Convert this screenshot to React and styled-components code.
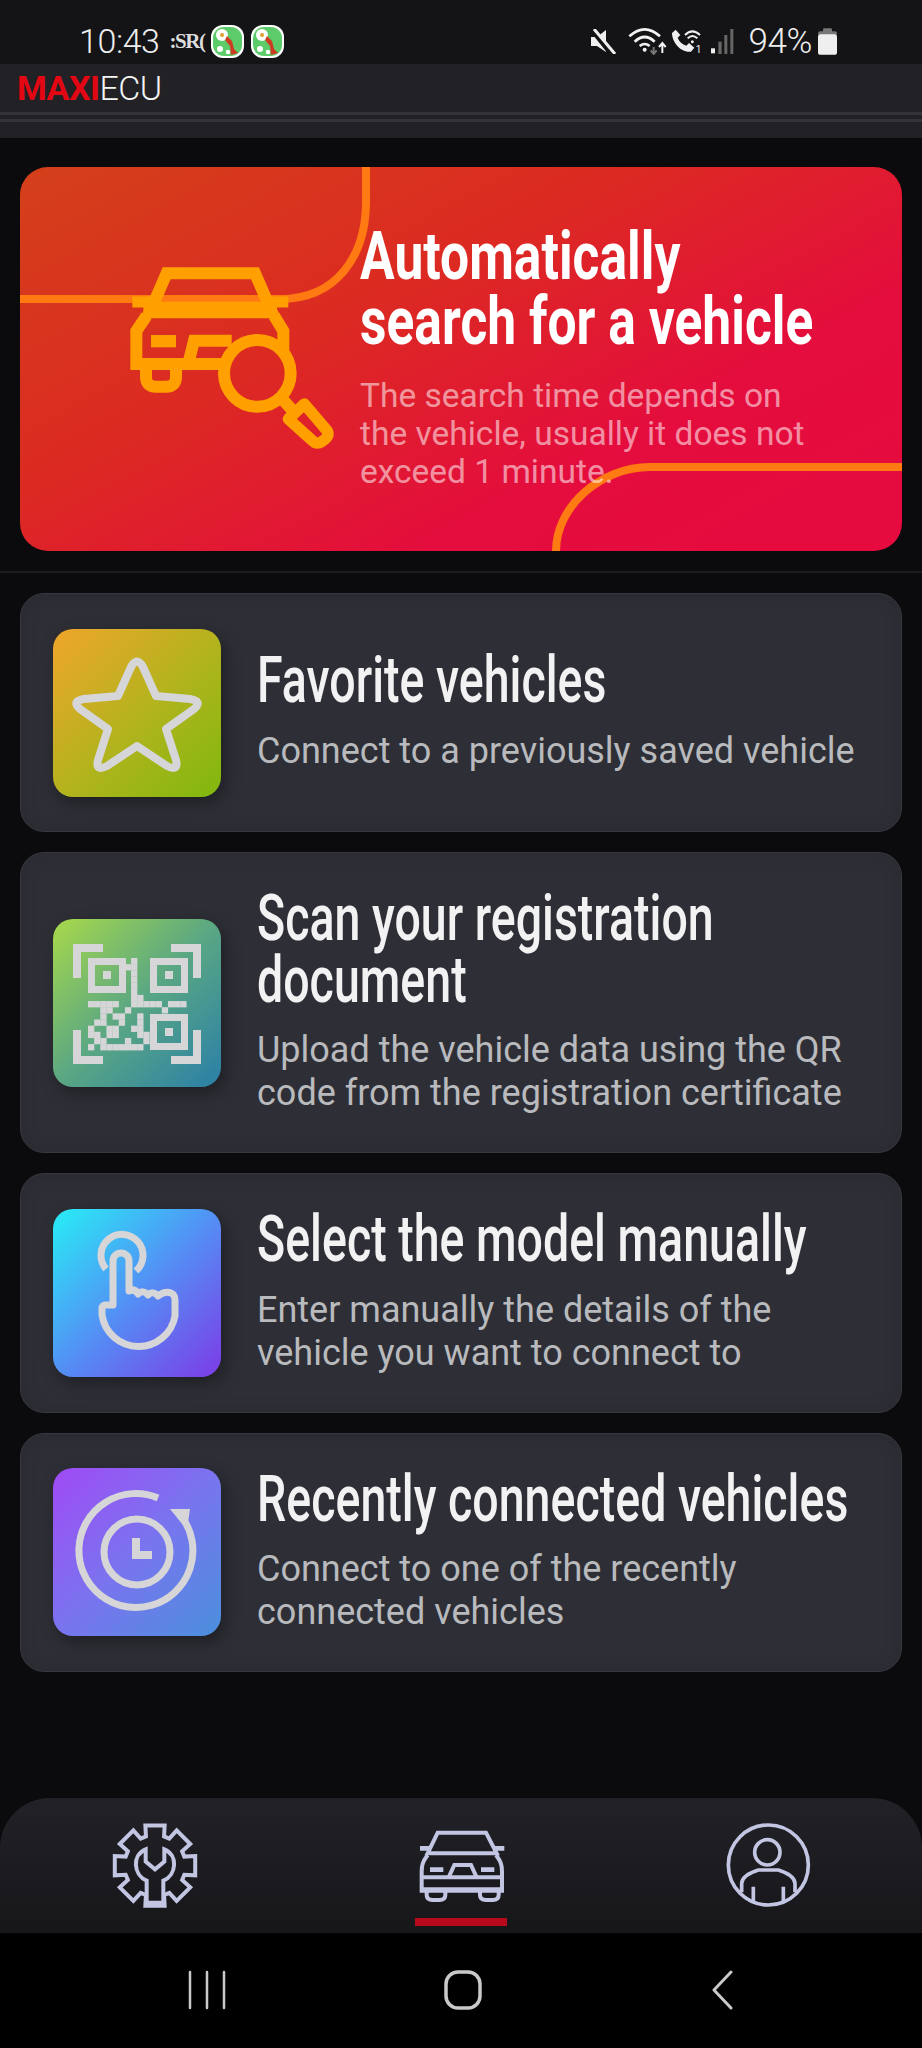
import React from "react";
import styled, { createGlobalStyle } from "styled-components";

const Global = createGlobalStyle`
  html, body { margin: 0; padding: 0; background: #0b0b0d; }
  #root { min-height: 100vh; }
  * { box-sizing: border-box; }
`;

const Body = `"Roboto", "Liberation Sans", sans-serif`;

const Page = styled.div`
  width: 922px; height: 2048px; display: flex; flex-direction: column;
  background: #0b0b0d; overflow: hidden; font-family: ${Body};
`;
const StatusBar = styled.div`
  height: 64px; background: #141416; display: flex; align-items: center;
  justify-content: space-between; padding: 18px 85px 0 79px; color: #eee; flex: none;
`;
const StatusGroup = styled.div`display: flex; align-items: center; gap: ${p => p.$gap || 0}px;`;
const StatusSvg = styled.svg`display: block; flex: none; margin-left: ${p => p.$ml || 0}px;`;
const Clock = styled.span`font-size: 34px; font-weight: 300; letter-spacing: -0.4px; line-height: 1;`;
const MiniGlyph = styled.span`font: 700 21px "Liberation Serif", serif; letter-spacing: -1.5px; color: #ddd; width: 34px; margin-left: 3px; white-space: nowrap;`;
const Percent = styled.span`font-size: 35px; font-weight: 300; letter-spacing: -0.4px; line-height: 1; margin-left: 14px; margin-right: 6px;`;

const Header = styled.header`flex: none; height: 74px; background: #212126; display: flex; flex-direction: column;`;
const Logo = styled.div`height: 48px; padding-left: 17px; display: flex; align-items: center; font: 300 34px ${Body}; letter-spacing: -0.5px; line-height: 1; color: #f4f4f4;`;
const LogoRed = styled.span`color: #e30613; font-weight: 700;`;
const HeaderRule = styled.div`height: 3px; background: #33333a; margin-bottom: 4px;`;

const Main = styled.main`flex: 1; display: flex; flex-direction: column; padding: 29px 20px 0;`;
const Hero = styled.section`
  position: relative; height: 384px; border-radius: 28px; overflow: hidden; display: flex;
  background: linear-gradient(152deg, #d4401a 0%, #dc2a22 38%, #e40d3d 70%, #e60a3e 100%);
`;
const HeroLines = styled.svg`position: absolute; inset: 0; width: 100%; height: 100%;`;
const HeroIcon = styled.div`position: relative; flex: none; width: 340px; padding: 88px 0 0 100px;`;
const HeroText = styled.div`position: relative; flex: 1; padding-top: 57px;`;
const HeroTitle = styled.h1`
  margin: 0; font: 700 67px/65px ${Body}; color: #fff; white-space: nowrap;
  transform: scaleX(.77); transform-origin: left center;
`;
const HeroSub = styled.p`margin: 23px 0 0; font: 400 33.500px/38px ${Body}; color: rgba(255,255,255,.55); white-space: nowrap;`;

const Divider = styled.div`height: 2px; background: #1c1c1f; margin: 20px -20px 20px;`;
const Cards = styled.div`display: flex; flex-direction: column; gap: 20px;`;
const Card = styled.article`
  min-height: 239px; display: flex; align-items: center; gap: 36px; padding: 0 32px;
  border-radius: 24px; border: 1px solid #37383f;
  background: #2e2f36; box-shadow: inset 0 0 18px rgba(0,0,0,.12);
`;
const Tile = styled.div`
  flex: none; width: 168px; height: 168px; border-radius: 20px; background: ${p => p.$bg};
  box-shadow: 4px 6px 16px rgba(0,0,0,.35); display: flex;
`;
const TileIcon = styled.svg`width: 168px; height: 168px; color: #d6d6d8;`;
const CardText = styled.div`flex: 1; min-width: 0; padding: 35px 0 37px;`;
const CardTitle = styled.h2`
  margin: 0; font: 500 64px/61.500px ${Body}; color: #f2f2f3; white-space: nowrap;
  transform: scaleX(.727); transform-origin: left center;
`;
const CardSub = styled.p`margin: 18px 0 0; font: 400 36px/43px ${Body}; color: #b9babd; white-space: nowrap;`;

const Nav = styled.nav`
  flex: none; height: 135px; border-radius: 50px 50px 0 0;
  background: linear-gradient(180deg, #212127 0%, #17171a 100%);
  display: flex; padding-left: 100px;
`;
const NavItem = styled.div`
  width: 110px; display: flex; flex-direction: column; align-items: center;
  padding-top: ${p => p.$top}px; margin-left: ${p => p.$left || 0}px;
`;
const Indicator = styled.div`width: 92px; height: 8px; background: #b80a1c; margin-top: 10px;`;

const SysNav = styled.div`flex: none; height: 115px; background: #000; display: flex; align-items: flex-start; padding-top: 37px;`;
const SysSlot = styled.div`margin-left: ${p => p.$left}px; display: flex;`;

const MuteIcon = () => (
  <StatusSvg width="26" height="25" viewBox="0 0 26 25">
    <path d="M0 8h6l9-7v22l-9-6H0z" fill="#f0f0f0" />
    <path d="M1 0l20 25" stroke="#141416" strokeWidth="6" />
    <path d="M3 0l21 25" stroke="#f0f0f0" strokeWidth="3" />
  </StatusSvg>
);

const Wifi = () => (
  <StatusSvg $ml={11} width="39" height="28" viewBox="0 0 117 84" fill="none" stroke="#f2f2f2" strokeWidth="8">
    <path d="M4 28Q50-14 96 28M20 44Q50 16 80 44M35 57Q50 45 65 57" />
    <circle cx="50" cy="68" r="6" fill="#f2f2f2" stroke="none" />
    <path d="M77 60V80M68 70L77 81L86 70" stroke="#777" strokeWidth="6" />
    <path d="M103 78V50M93 60L103 48L113 60" strokeWidth="6" />
  </StatusSvg>
);

const CallWifi = () => (
  <StatusSvg $ml={4} width="31" height="25" viewBox="0 0 93 75" fill="none" overflow="visible">
    <path d="M3 12L14 2L28 18L20 26C24 38 34 46 46 50L54 42L70 56L60 68C30 72 3 40 3 12Z" fill="#f0f0f0" />
    <path d="M42 18Q64-4 87 18M50 28Q64 14 79 28" stroke="#f0f0f0" strokeWidth="6" />
    <circle cx="64" cy="38" r="4.500" fill="#f0f0f0" />
    <text x="74" y="72" fontFamily="Roboto, sans-serif" fontSize="30" fill="#f0f0f0">1</text>
  </StatusSvg>
);

const Signal = () => (
  <StatusSvg $ml={8} width="24" height="25" viewBox="0 0 72 75">
    <rect x="3" y="58" width="12" height="15" fill="#eee" />
    <rect x="25" y="38" width="10" height="37" fill="#666" />
    <rect x="43" y="18" width="9" height="57" fill="#666" />
    <rect x="61" y="0" width="9" height="75" fill="#666" />
  </StatusSvg>
);

const Battery = () => (
  <StatusSvg width="19" height="27" viewBox="0 0 57 80">
    <rect x="15" y="0" width="27" height="14" rx="4" fill="#777" />
    <rect x="0" y="9" width="57" height="14" rx="6" fill="#777" />
    <rect x="0" y="18" width="57" height="62" rx="8" fill="#efefef" />
  </StatusSvg>
);

const AppBadge = () => (
  <svg width="33" height="33" viewBox="0 0 33 33">
    <rect width="33" height="33" rx="12" fill="#fff" />
    <rect x="2" y="2" width="29" height="29" rx="11" fill="#5ecb6a" />
    <circle cx="11" cy="10" r="6" fill="#fff" />
    <circle cx="11" cy="10" r="2" fill="#dca22a" />
    <circle cx="9" cy="24" r="3" fill="#fff" />
    <circle cx="17" cy="27" r="2.200" fill="#fff" />
    <path d="M16 11l5 5 2 8 4 4-7 2-1-9-5-6z" fill="#cf3a22" />
  </svg>
);

const HeroCar = () => (
  <svg width="225" height="205" viewBox="0 0 675 615" fill="none" stroke="#ffa000" strokeWidth="36">
    <path d="M37 141H100M440 141H505" strokeWidth="33" />
    <path d="M140 55H405L450 158H95Z" />
    <path d="M70 172H470" />
    <path d="M80 182L49 228V327H312" />
    <path d="M462 182L490 228V292" />
    <path d="M93 240H168V277H93Z" fill="#ffa000" stroke="none" />
    <path d="M205 325L222 257H335" />
    <path d="M78 340V365Q78 395 108 395H138Q168 395 168 365V340" />
    <circle cx="412" cy="355" r="100" />
    <path d="M485 430L525 475" />
    <path d="M505 492L553 447L622 528Q630 545 605 560Q590 570 575 555Z" strokeWidth="34" strokeLinejoin="round" />
  </svg>
);

const StarIcon = () => (
  <TileIcon viewBox="0 0 168 168" fill="none" stroke="currentColor" strokeWidth="8" strokeLinejoin="round">
    <path d="M78 38Q84 27 90 38L103 67L137 70Q150 72 141 80L113 100L123 131Q126 143 114 137L84 117L54 137Q42 143 45 131L55 100L27 80Q18 72 31 70L65 67Z" />
  </TileIcon>
);

const QR_BITS = [
  "       #        ",
  "      ##        ",
  "       #        ",
  "       #        ",
  "       #        ",
  "       #        ",
  "       ##       ",
  "#####  ##### ###",
  "  ##  #     #   ",
  "  # ##  #       ",
  " ##  #  #       ",
  "#  ##  ##       ",
  "## ##   ##      ",
  " ##   #  #      ",
  "# #######       ",
];

const QrIcon = () => (
  <TileIcon viewBox="0 0 168 168" fill="none" stroke="currentColor">
    <path d="M50 29H24V59M118 29H144V59M50 141H24V111M118 141H144V111" strokeWidth="8" />
    <rect x="38.500" y="42.500" width="31" height="28" strokeWidth="7" />
    <rect x="100.500" y="42.500" width="31" height="28" strokeWidth="7" />
    <rect x="100.500" y="98.500" width="31" height="29" strokeWidth="7" />
    <g fill="currentColor" stroke="none">
      <rect x="50" y="52" width="8" height="8" />
      <rect x="112" y="52" width="8" height="8" />
      <rect x="112" y="109" width="8" height="8" />
      {QR_BITS.flatMap((row, r) =>
        row.split("").map((c, i) =>
          c === "#" ? <rect key={`${r}-${i}`} x={35 + i * 6.15} y={39 + r * 6.15} width="6.300" height="6.300" /> : null
        )
      )}
    </g>
  </TileIcon>
);

const HandIcon = () => (
  <TileIcon viewBox="0 0 168 168" fill="none" stroke="currentColor" strokeWidth="7" strokeLinejoin="round">
    <path d="M53 60A21 21 0 1 1 83 62" />
    <path d="M60 96V52a8 8 0 0 1 16 0V82c4-2 7-1 9 3 3-3 7-3 10 1 3-3 7-3 10 1 4-3 8-5 13-3 3 1 4 4 4 7v16A37 37 0 0 1 49 106V99a3 3 0 0 1 3-3z" />
  </TileIcon>
);

const ClockIcon = () => (
  <TileIcon viewBox="0 0 168 168" fill="none" stroke="currentColor" strokeWidth="7">
    <path d="M105 30A57 57 0 1 0 129 49" />
    <path d="M117 41H137L134 62Z" fill="currentColor" stroke="none" />
    <circle cx="84" cy="84" r="33" />
    <path d="M83 70V87H99" strokeWidth="8" />
  </TileIcon>
);

const gearPoints = () => {
  const cx = 165, cy = 167, n = 8, out = 124, inn = 92;
  const pts = [];
  for (let i = 0; i < n; i++) {
    const a = (i / n) * Math.PI * 2 - Math.PI / 2;
    [[inn, -0.3], [out, -0.235], [out, 0.235], [inn, 0.3]].forEach(([r, d]) => {
      pts.push(`${(cx + r * Math.cos(a + d)).toFixed(1)},${(cy + r * Math.sin(a + d)).toFixed(1)}`);
    });
  }
  return pts.join(" ");
};

const NavSvg = styled.svg`display: block; color: #c3c6e3; flex: none;`;

const GearIcon = () => (
  <NavSvg width="110" height="110" viewBox="0 0 330 330" fill="none" stroke="currentColor" strokeWidth="12">
    <polygon points={gearPoints()} />
    <path d="M140 278V212C100 195 95 135 137 118V155L165 178L193 155V118C235 135 230 195 190 212V278Z" />
  </NavSvg>
);

const CarIcon = () => (
  <NavSvg width="110" height="88" viewBox="0 0 330 264" fill="none" stroke="currentColor" strokeWidth="12">
    <path d="M95 38H240L272 100H65Z" />
    <path d="M42 85H75M262 85H295" strokeWidth="14" />
    <path d="M65 105C50 125 47 135 47 155V212H288V155C288 135 285 125 270 105" />
    <path d="M72 142H112V156H72ZM225 142H265V156H225Z" fill="currentColor" stroke="none" />
    <path d="M128 172L145 135H195L212 172" />
    <path d="M47 172H288M47 208H288" />
    <path d="M62 212V225Q62 240 80 240H100Q118 240 118 225V212M222 212V225Q222 240 240 240H260Q278 240 278 225V212" />
  </NavSvg>
);

const PersonIcon = () => (
  <NavSvg width="110" height="100" viewBox="0 0 330 300" fill="none" stroke="currentColor" strokeWidth="11">
    <circle cx="160" cy="150" r="120" />
    <circle cx="157" cy="112" r="38" />
    <path d="M80 232V205Q82 180 130 165H190Q238 180 240 205V232" />
    <path d="M115 215V262M205 215V262" />
  </NavSvg>
);

const SysIcon = ({ w, children }) => (
  <svg width={w} height="40" viewBox={`0 0 ${w} 40`} fill="none" stroke="#c9c9c9" strokeWidth="2.500" strokeLinecap="round" strokeLinejoin="round">
    {children}
  </svg>
);

const items = [
  { title: "Favorite vehicles", sub: ["Connect to a previously saved vehicle"], bg: "linear-gradient(135deg,#f0a52a 0%,#b3b31e 52%,#7fb80e 100%)", icon: <StarIcon /> },
  { title: ["Scan your registration", "document"], sub: ["Upload the vehicle data using the QR", "code from the registration certificate"], bg: "linear-gradient(135deg,#a8d94a 0%,#5aa783 50%,#2a7fa8 100%)", icon: <QrIcon /> },
  { title: "Select the model manually", sub: ["Enter manually the details of the", "vehicle you want to connect to"], bg: "linear-gradient(135deg,#27eef5 0%,#5390f5 50%,#7d3be6 100%)", icon: <HandIcon /> },
  { title: "Recently connected vehicles", sub: ["Connect to one of the recently", "connected vehicles"], bg: "linear-gradient(135deg,#a04af5 0%,#7a74ef 50%,#4a90dc 100%)", icon: <ClockIcon /> },
];

const Lines = ({ arr }) => [].concat(arr).map((l, i) => <React.Fragment key={i}>{i > 0 && <br />}{l}</React.Fragment>);

export default function App() {
  return (
    <Page>
      <Global />
      <StatusBar>
        <StatusGroup $gap={7}>
          <Clock>10:43</Clock>
          <MiniGlyph>:SR(</MiniGlyph>
          <AppBadge />
          <AppBadge />
        </StatusGroup>
        <StatusGroup>
          <MuteIcon />
          <Wifi />
          <CallWifi />
          <Signal />
          <Percent>94%</Percent>
          <Battery />
        </StatusGroup>
      </StatusBar>
      <Header>
        <Logo><LogoRed>MAXI</LogoRed>ECU</Logo>
        <HeaderRule />
        <HeaderRule />
      </Header>
      <Main>
        <Hero>
          <HeroLines viewBox="0 0 882 384" fill="none" stroke="#ff7a12" strokeWidth="8" preserveAspectRatio="none">
            <path d="M346 0V34C346 90 316 132 260 132H0" />
            <path d="M882 300H630C580 300 536 340 536 384" />
          </HeroLines>
          <HeroIcon><HeroCar /></HeroIcon>
          <HeroText>
            <HeroTitle>Automatically<br />search for a vehicle</HeroTitle>
            <HeroSub>The search time depends on<br />the vehicle, usually it does not<br />exceed 1 minute.</HeroSub>
          </HeroText>
        </Hero>
        <Divider />
        <Cards>
          {items.map((it, i) => (
            <Card key={i}>
              <Tile $bg={it.bg}>{it.icon}</Tile>
              <CardText>
                <CardTitle><Lines arr={it.title} /></CardTitle>
                <CardSub><Lines arr={it.sub} /></CardSub>
              </CardText>
            </Card>
          ))}
        </Cards>
      </Main>
      <Nav>
        <NavItem $top={12}><GearIcon /></NavItem>
        <NavItem $top={22} $left={196}><CarIcon /><Indicator /></NavItem>
        <NavItem $top={17} $left={199}><PersonIcon /></NavItem>
      </Nav>
      <SysNav>
        <SysSlot $left={188}>
          <SysIcon w={38}><path d="M2 2V38M19 2V38M36 2V38" /></SysIcon>
        </SysSlot>
        <SysSlot $left={218}>
          <SysIcon w={38}><rect x="2" y="2" width="34" height="36" rx="12" strokeWidth="3.500" /></SysIcon>
        </SysSlot>
        <SysSlot $left={229}>
          <SysIcon w={22}><path d="M20 2L3 20L20 38" strokeWidth="3" /></SysIcon>
        </SysSlot>
      </SysNav>
    </Page>
  );
}
